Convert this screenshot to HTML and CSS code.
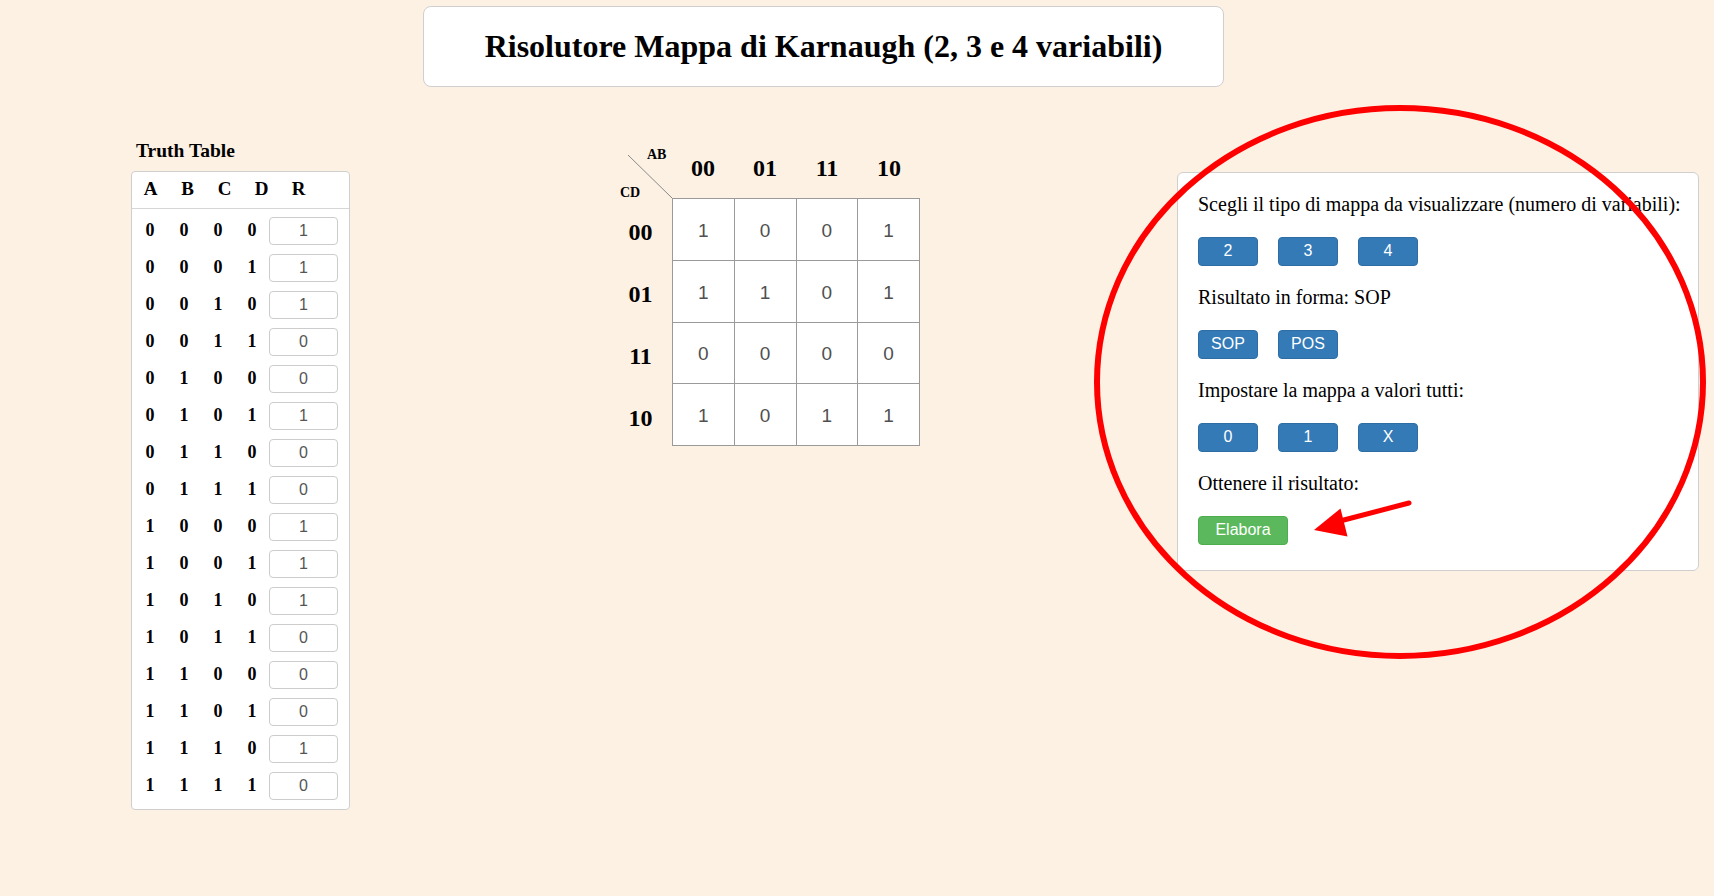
FILE: index.html
```html
<!DOCTYPE html>
<html lang="it">
<head>
<meta charset="utf-8">
<title>Risolutore Mappa di Karnaugh</title>
<link rel="stylesheet" href="styles.css">
</head>
<body>
<header class="title-box">
  <h1 class="title">Risolutore Mappa di Karnaugh (2, 3 e 4 variabili)</h1>
</header>

<main class="layout">
  <section class="truth">
    <h3 class="truth-title">Truth Table</h3>
    <div class="truth-box">
      <div class="truth-head"><span>A</span><span>B</span><span>C</span><span>D</span><span>R</span></div>
      <div class="truth-rows">
        <div class="truth-row"><span class="bit">0</span><span class="bit">0</span><span class="bit">0</span><span class="bit">0</span><input class="truth-input" value="1"></div>
        <div class="truth-row"><span class="bit">0</span><span class="bit">0</span><span class="bit">0</span><span class="bit">1</span><input class="truth-input" value="1"></div>
        <div class="truth-row"><span class="bit">0</span><span class="bit">0</span><span class="bit">1</span><span class="bit">0</span><input class="truth-input" value="1"></div>
        <div class="truth-row"><span class="bit">0</span><span class="bit">0</span><span class="bit">1</span><span class="bit">1</span><input class="truth-input" value="0"></div>
        <div class="truth-row"><span class="bit">0</span><span class="bit">1</span><span class="bit">0</span><span class="bit">0</span><input class="truth-input" value="0"></div>
        <div class="truth-row"><span class="bit">0</span><span class="bit">1</span><span class="bit">0</span><span class="bit">1</span><input class="truth-input" value="1"></div>
        <div class="truth-row"><span class="bit">0</span><span class="bit">1</span><span class="bit">1</span><span class="bit">0</span><input class="truth-input" value="0"></div>
        <div class="truth-row"><span class="bit">0</span><span class="bit">1</span><span class="bit">1</span><span class="bit">1</span><input class="truth-input" value="0"></div>
        <div class="truth-row"><span class="bit">1</span><span class="bit">0</span><span class="bit">0</span><span class="bit">0</span><input class="truth-input" value="1"></div>
        <div class="truth-row"><span class="bit">1</span><span class="bit">0</span><span class="bit">0</span><span class="bit">1</span><input class="truth-input" value="1"></div>
        <div class="truth-row"><span class="bit">1</span><span class="bit">0</span><span class="bit">1</span><span class="bit">0</span><input class="truth-input" value="1"></div>
        <div class="truth-row"><span class="bit">1</span><span class="bit">0</span><span class="bit">1</span><span class="bit">1</span><input class="truth-input" value="0"></div>
        <div class="truth-row"><span class="bit">1</span><span class="bit">1</span><span class="bit">0</span><span class="bit">0</span><input class="truth-input" value="0"></div>
        <div class="truth-row"><span class="bit">1</span><span class="bit">1</span><span class="bit">0</span><span class="bit">1</span><input class="truth-input" value="0"></div>
        <div class="truth-row"><span class="bit">1</span><span class="bit">1</span><span class="bit">1</span><span class="bit">0</span><input class="truth-input" value="1"></div>
        <div class="truth-row"><span class="bit">1</span><span class="bit">1</span><span class="bit">1</span><span class="bit">1</span><input class="truth-input" value="0"></div>
      </div>
    </div>
  </section>

  <section class="kmap">
    <div class="kmap-corner">
      <svg class="kmap-diag" width="44" height="43" viewBox="0 0 44 43"><line x1="0" y1="0" x2="44" y2="43" stroke="#8a8a8a" stroke-width="1"/></svg>
      <span class="lbl-ab">AB</span>
      <span class="lbl-cd">CD</span>
    </div>
    <div class="kmap-cols"><span>00</span><span>01</span><span>11</span><span>10</span></div>
    <div class="kmap-rows"><span>00</span><span>01</span><span>11</span><span>10</span></div>
    <div class="kmap-cells">
      <div class="kcell">1</div><div class="kcell">0</div><div class="kcell">0</div><div class="kcell">1</div>
      <div class="kcell">1</div><div class="kcell">1</div><div class="kcell">0</div><div class="kcell">1</div>
      <div class="kcell">0</div><div class="kcell">0</div><div class="kcell">0</div><div class="kcell">0</div>
      <div class="kcell">1</div><div class="kcell">0</div><div class="kcell">1</div><div class="kcell">1</div>
    </div>
  </section>

  <section class="panel">
    <p class="panel-text">Scegli il tipo di mappa da visualizzare (numero di variabili):</p>
    <div class="btn-row"><button class="btn">2</button><button class="btn">3</button><button class="btn">4</button></div>
    <p class="panel-text">Risultato in forma: SOP</p>
    <div class="btn-row"><button class="btn">SOP</button><button class="btn">POS</button></div>
    <p class="panel-text">Impostare la mappa a valori tutti:</p>
    <div class="btn-row"><button class="btn">0</button><button class="btn">1</button><button class="btn">X</button></div>
    <p class="panel-text">Ottenere il risultato:</p>
    <div class="btn-row"><button class="btn btn-green">Elabora</button></div>
  </section>
</main>

<svg class="annot" width="1714" height="896" viewBox="0 0 1714 896">
  <ellipse cx="1400" cy="382" rx="303" ry="274" fill="none" stroke="#ff0000" stroke-width="6"/>
  <line x1="1409" y1="503" x2="1340" y2="521" stroke="#ff0000" stroke-width="5" stroke-linecap="round"/>
  <polygon points="1314,530 1340.5,508.5 1347.5,536.5" fill="#ff0000"/>
</svg>
</body>
</html>
```

FILE: styles.css
```css
html, body {
  margin: 0;
  padding: 0;
}

body {
  width: 1714px;
  height: 896px;
  overflow: hidden;
  position: relative;
  background: #fdf1e4;
  font-family: "Liberation Serif", "Times New Roman", serif;
  color: #000;
}

/* Title */
.title-box {
  margin: 6px 0 0 423px;
  width: 801px;
  height: 81px;
  box-sizing: border-box;
  background: #fff;
  border: 1px solid #cfcfcf;
  border-radius: 8px;
  display: flex;
  align-items: center;
  justify-content: center;
}

.title {
  margin: 0;
  font-size: 32px;
  font-weight: bold;
  line-height: 37px;
}

/* Layout */
.layout {
  display: flex;
  align-items: flex-start;
  padding-left: 131px;
}

/* Truth table */
.truth {
  margin-top: 53px;
  width: 219px;
}

.truth-title {
  margin: 0 0 10px 5px;
  font-size: 19.5px;
  line-height: 21px;
  font-weight: bold;
}

.truth-box {
  background: #fff;
  border: 1px solid #cfcfcf;
  border-radius: 4px;
  padding-bottom: 5px;
}

.truth-head {
  display: flex;
  align-items: center;
  height: 37px;
  box-sizing: border-box;
  padding-bottom: 2px;
  border-bottom: 1px solid #d6d6d6;
}

.truth-head span {
  width: 37px;
  text-align: center;
  font-weight: bold;
  font-size: 19px;
}

.truth-rows {
  padding: 3px 0 0 1px;
}

.truth-row {
  display: flex;
  align-items: center;
  height: 37px;
}

.bit {
  width: 34px;
  text-align: center;
  font-weight: bold;
  font-size: 18px;
}

.truth-input {
  width: 69px;
  height: 28px;
  box-sizing: border-box;
  margin: 0;
  padding: 0;
  border: 1px solid #cccccc;
  border-radius: 4px;
  background: #fff;
  text-align: center;
  font-family: "Liberation Sans", Arial, sans-serif;
  font-size: 16px;
  color: #555;
}

/* K-map */
.kmap {
  margin-left: 278px;
  margin-top: 68px;
  display: grid;
  grid-template-columns: 44px 248px;
  grid-template-rows: 43px 248px;
}

.kmap-corner {
  position: relative;
}

.kmap-diag {
  display: block;
}

.lbl-ab,
.lbl-cd {
  position: absolute;
  font-weight: bold;
  font-size: 14px;
  line-height: 16px;
}

.lbl-ab {
  left: 19px;
  top: -8px;
}

.lbl-cd {
  left: -8px;
  top: 30px;
}

.kmap-cols {
  display: grid;
  grid-template-columns: repeat(4, 62px);
  align-items: center;
  padding-bottom: 18px;
}

.kmap-cols span,
.kmap-rows span {
  text-align: center;
  font-weight: bold;
  font-size: 24px;
  line-height: 26px;
}

.kmap-rows {
  display: grid;
  grid-template-rows: repeat(4, 62px);
  align-items: center;
  padding-right: 19px;
}

.kmap-rows span {
  padding-top: 6px;
}

.kmap-cells {
  display: grid;
  grid-template-columns: repeat(4, 1fr);
  grid-template-rows: repeat(4, 1fr);
  gap: 1px;
  padding: 1px;
  background: #9a9a9a;
}

.kcell {
  background: #fff;
  display: flex;
  align-items: center;
  justify-content: center;
  padding-top: 3px;
  font-family: "Liberation Sans", Arial, sans-serif;
  font-size: 19px;
  color: #505050;
}

/* Control panel */
.panel {
  margin-left: 257px;
  margin-top: 85px;
  width: 522px;
  box-sizing: border-box;
  padding: 20px 20px 25px;
  background: #fff;
  border: 1px solid #cfcfcf;
  border-radius: 6px;
  display: flex;
  flex-direction: column;
  align-items: flex-start;
  gap: 20.5px;
}

.panel-text {
  margin: 0;
  font-size: 20px;
  line-height: 23px;
  white-space: nowrap;
}

.btn-row {
  display: flex;
  gap: 20px;
}

.btn {
  width: 60px;
  height: 29px;
  box-sizing: border-box;
  margin: 0;
  padding: 0;
  border: 1px solid #2e6da4;
  border-radius: 4px;
  background: #337ab7;
  color: #fff;
  font-family: "Liberation Sans", Arial, sans-serif;
  font-size: 16px;
}

.btn-green {
  width: 90px;
  background: #5cb85c;
  border-color: #4cae4c;
}

/* Annotation overlay */
.annot {
  position: absolute;
  top: 0;
  left: 0;
  pointer-events: none;
}
```
